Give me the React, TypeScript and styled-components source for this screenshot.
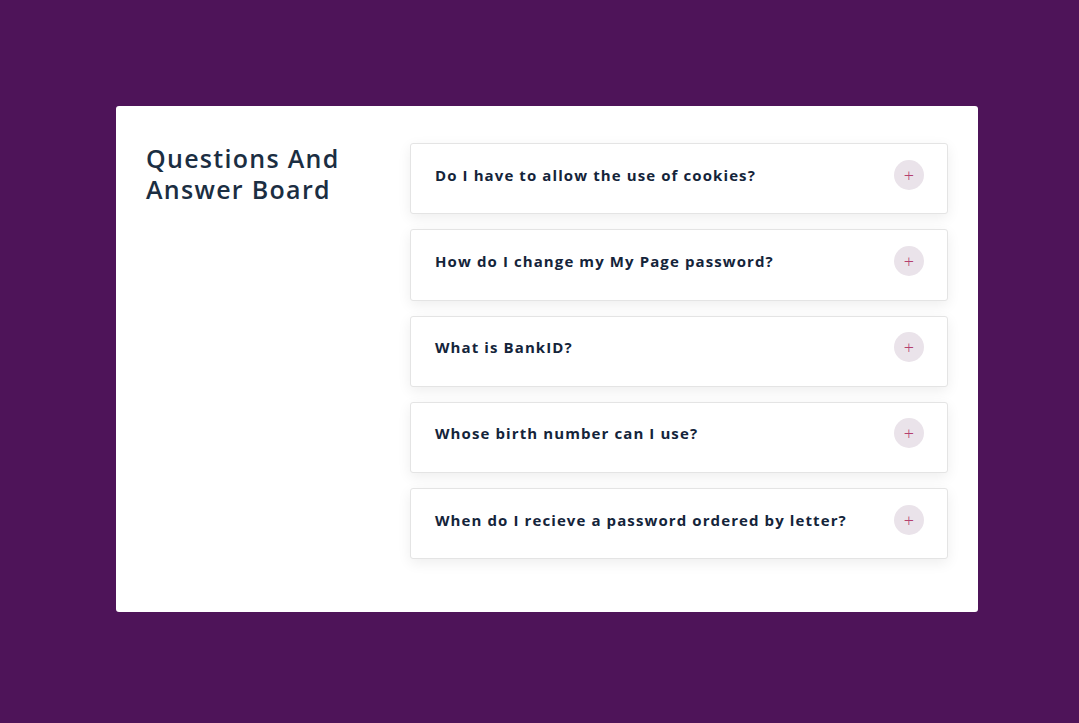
import styled, { createGlobalStyle } from "styled-components";

const questions = [
  "Do I have to allow the use of cookies?",
  "How do I change my My Page password?",
  "What is BankID?",
  "Whose birth number can I use?",
  "When do I recieve a password ordered by letter?",
];

export default function App() {
  return (
    <>
      <GlobalStyle />
      <Page>
        <Board>
          <Title>Questions And Answer Board</Title>

          <List>
            {questions.map((q) => (
              <Item key={q}>
                <Question>{q}</Question>
                <Toggle>+</Toggle>
              </Item>
            ))}
          </List>
        </Board>
      </Page>
    </>
  );
}

const GlobalStyle = createGlobalStyle`
  * {
    box-sizing: border-box;
  }

  body {
    margin: 0;
    background-color: #4e1459;
    font-family: "Open Sans", "Noto Sans", sans-serif;
  }
`;

const Page = styled.div`
  width: 100%;
  min-height: 723px;
  padding: 106px 0 0 116px;
  display: flex;
`;

const Board = styled.div`
  width: 862px;
  height: 506px;
  background-color: #ffffff;
  border-radius: 3px;
  padding: 37px 30px 0 30px;

  display: grid;
  grid-template-columns: 264px 1fr;
  align-items: start;
`;

const Title = styled.h1`
  margin: 0;
  width: 230px;
  color: #1b2e42;

  font-size: 25px;
  font-weight: 600;
  line-height: 31px;
  letter-spacing: 1.3px;
`;

const List = styled.div`
  display: flex;
  flex-direction: column;
  gap: 15px;
`;

const Item = styled.div`
  height: 71.25px;
  padding: 0 23px 8px 24px;
  background-color: #ffffff;
  border: 1px solid #e4e4e4;
  border-radius: 3px;
  box-shadow: 0 4px 14px rgba(0, 0, 0, 0.07);

  display: flex;
  align-items: center;
  justify-content: space-between;
`;

const Question = styled.p`
  margin: 0;
  color: #14243a;

  font-size: 15px;
  font-weight: 700;
  letter-spacing: 1.1px;
`;

const Toggle = styled.span`
  width: 30px;
  height: 30px;
  border-radius: 50%;
  background-color: #eae3ea;
  color: #b4406f;

  display: flex;
  align-items: center;
  justify-content: center;
  font-size: 18px;
  font-weight: 300;
  line-height: 1;
`;
